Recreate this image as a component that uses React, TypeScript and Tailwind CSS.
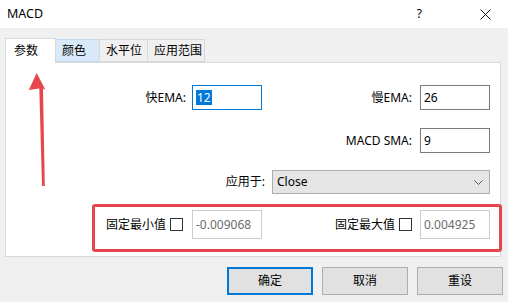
import React from "react";

const font = { fontFamily: '"Noto Sans", "Noto Sans CJK SC", sans-serif' };

const tabs = [
  { label: "参数", w: "w-[51px]", active: true },
  { label: "颜色", w: "w-[45px]", hover: true },
  { label: "水平位", w: "w-[49px]" },
  { label: "应用范围", w: "w-[58px]" },
];

function Field({
  value,
  h = "h-[25px]",
  disabled,
  focused,
}: {
  value: string;
  h?: string;
  disabled?: boolean;
  focused?: boolean;
}) {
  return (
    <div
      className={`w-[70px] ${h} bg-white border flex items-center pl-[3px] ${
        focused
          ? "border-[#0078d7]"
          : disabled
          ? "border-[#cccccc] text-[#6d6d6d]"
          : "border-[#7a7a7a] text-black"
      }`}
    >
      {focused ? (
        <span className="bg-[#0078d7] text-white leading-[15px] px-[1px]">{value}</span>
      ) : (
        <span className="leading-[15px]">{value}</span>
      )}
    </div>
  );
}

function Check() {
  return <div className="w-[13px] h-[13px] border border-[#333333] bg-white" />;
}

export default function App() {
  return (
    <div
      className="relative w-[508px] h-[302px] bg-[#f0f0f0] text-[12px] text-black overflow-hidden"
      style={font}
    >
      {/* Title bar */}
      <div className="h-[28px] bg-white flex items-center pl-[7px]">
        <span className="text-[12.5px]">MACD</span>
        <span className="ml-auto mr-[58px] text-[12px]">?</span>
        <svg width="11" height="11" viewBox="0 0 11 11" className="mr-[17px]">
          <path d="M0.5 0.5 L10.5 10.5 M10.5 0.5 L0.5 10.5" stroke="#111" strokeWidth="1" />
        </svg>
      </div>

      {/* Tabs */}
      <div className="pt-[9px] pl-[5px] flex items-end h-[34px]">
        {tabs.map((t) =>
          t.active ? (
            <div
              key={t.label}
              className={`${t.w} h-[25px] bg-white border border-b-0 border-[#d9d9d9] pl-[8px] pt-[3px] relative z-10 -mb-px`}
            >
              {t.label}
            </div>
          ) : (
            <div
              key={t.label}
              className={`${t.w} h-[23px] -ml-px border pl-[6px] pt-[2px] ${
                t.hover ? "bg-[#d8eaf9] border-[#c1dbf3]" : "bg-[#f0f0f0] border-[#d9d9d9]"
              }`}
            >
              {t.label}
            </div>
          )
        )}
      </div>

      {/* Panel */}
      <div className="ml-[5px] w-[496px] h-[195px] bg-white border border-[#d9d9d9] pt-[22px]">
        <div className="grid grid-cols-[256px_228px] items-center">
          <div className="flex items-center justify-end gap-[6px]">
            <span>快EMA:</span>
            <Field value="12" focused />
          </div>
          <div className="flex items-center justify-end gap-[8px]">
            <span>慢EMA:</span>
            <Field value="26" />
          </div>
        </div>

        <div className="grid grid-cols-[256px_228px] items-center mt-[18px]">
          <div />
          <div className="flex items-center justify-end gap-[8px]">
            <span>MACD SMA:</span>
            <Field value="9" />
          </div>
        </div>

        <div className="flex items-center justify-end gap-[7px] w-[484px] mt-[17px]">
          <span>应用于:</span>
          <div className="w-[218px] h-[24px] bg-[#e5e5e5] border border-[#adadad] flex items-center pl-[4px] pr-[6px]">
            <span>Close</span>
            <svg width="9" height="5" viewBox="0 0 9 5" className="ml-auto">
              <path d="M0.5 0.5 L4.5 4.5 L8.5 0.5" fill="none" stroke="#555" strokeWidth="1" />
            </svg>
          </div>
        </div>

        <div className="grid grid-cols-[256px_228px] items-center mt-[16px]">
          <div className="flex items-center justify-end">
            <span>固定最小值</span>
            <div className="ml-[4px] mr-[9px]">
              <Check />
            </div>
            <Field value="-0.009068" h="h-[29px]" disabled />
          </div>
          <div className="flex items-center justify-end">
            <span>固定最大值</span>
            <div className="ml-[4px] mr-[8px]">
              <Check />
            </div>
            <Field value="0.004925" h="h-[29px]" disabled />
          </div>
        </div>
      </div>

      {/* Buttons */}
      <div className="flex justify-end gap-[9px] pr-[5px] mt-[10px]">
        <button className="w-[86px] h-[28px] bg-[#e1e1e1] border-2 border-[#0078d7]">确定</button>
        <button className="w-[86px] h-[28px] bg-[#e1e1e1] border border-[#adadad]">取消</button>
        <button className="w-[86px] h-[28px] bg-[#e1e1e1] border border-[#adadad]">重设</button>
      </div>

      {/* Annotation: red box */}
      <div className="absolute left-[92px] top-[204px] w-[410px] h-[48px] border-[3px] border-[#e5474c] rounded-[3px] pointer-events-none" />

      {/* Annotation: red arrow */}
      <svg className="absolute left-0 top-0 pointer-events-none" width="508" height="302">
        <polygon
          points="36.7,73 45.5,90 43,88.5 44.8,186 42,186 39.3,88.5 28.8,90"
          fill="#e5474c"
        />
      </svg>
    </div>
  );
}
